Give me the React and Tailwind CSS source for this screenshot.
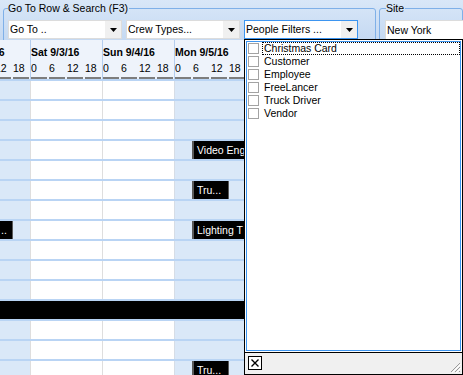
import React from "react";

const days = ["Fri 9/2/16", "Sat 9/3/16", "Sun 9/4/16", "Mon 9/5/16"];
const hours = ["0", "6", "12", "18"];
const people = ["Christmas Card", "Customer", "Employee", "FreeLancer", "Truck Driver", "Vendor"];

const bars = {
  3: [{ left: 192, width: 53, label: "Video Eng" }],
  5: [{ left: 192, width: 37, label: "Tru...", edge: true }],
  7: [
    { left: 0, width: 13, label: "..", edge: true, flat: true },
    { left: 192, width: 53, label: "Lighting T" },
  ],
  14: [{ left: 192, width: 37, label: "Tru...", edge: true }],
};

function Arrow() {
  return (
    <div className="w-[16px] h-full bg-[#f0f0f0] flex items-center justify-center">
      <svg width="7" height="4" viewBox="0 0 7 4">
        <path d="M0 0 H7 L3.5 4 Z" fill="#000" />
      </svg>
    </div>
  );
}

function Combo({ label, focused }) {
  return (
    <div
      className={`w-[114px] h-[19px] shrink-0 bg-white flex items-stretch border ${
        focused ? "border-[#3d95f0]" : "border-[#dcdcdc]"
      }`}
    >
      <span className="flex-1 pl-[1px] leading-[17px] whitespace-nowrap overflow-hidden">{label}</span>
      <Arrow />
    </div>
  );
}

function Row({ index }) {
  const black = index === 11;
  return (
    <div className="h-[20px] border-t-2 border-[#b9d4f4] relative overflow-hidden">
      <div className="flex ml-[-42px] h-full">
        <div className="w-[72px] shrink-0 bg-[#dae8f8]" />
        <div className="w-[72px] shrink-0 bg-white border-l border-[#dedede]" />
        <div className="w-[72px] shrink-0 bg-white border-l border-[#dedede]" />
        <div className="w-[72px] shrink-0 bg-[#dae8f8] border-l border-[#d6dde6]" />
        <div className="w-[72px] shrink-0 bg-[#dae8f8]" />
      </div>
      {black && <div className="absolute inset-0 bg-black" />}
      {(bars[index] || []).map((b, i) => (
        <div
          key={i}
          className={`absolute top-0 bottom-0 bg-black text-white leading-[18px] whitespace-nowrap overflow-hidden ${
            b.flat ? "pl-[1px]" : "border-l-2 border-[#5a5a5a] pl-[3px]"
          } ${b.edge ? "border-r border-r-[#5a5a5a]" : ""}`}
          style={{ left: b.left, width: b.width }}
        >
          {b.label}
        </div>
      ))}
    </div>
  );
}

export default function App() {
  return (
    <div className="w-[463px] h-[375px] relative overflow-hidden bg-white text-black text-[10.5px] font-['Liberation_Sans',Arial,sans-serif]">
      {/* toolbar */}
      <div className="h-[40px] overflow-hidden flex bg-linear-to-b from-[#d9e7f8] to-[#c5d9f2]">
        <fieldset className="ml-[3px] mt-[2px] w-[373px] h-[60px] shrink-0 min-w-0 border border-[#7fb0e8] rounded-[3px]">
          <legend className="ml-[4px] pr-[1px] leading-[12px]">Go To Row &amp; Search (F3)</legend>
          <div className="flex gap-[4px] mt-[6px] pl-[4px]">
            <Combo label="Go To .." />
            <Combo label="Crew Types..." />
            <Combo label="People Filters ..." focused />
          </div>
        </fieldset>
        <fieldset className="ml-[3px] mt-[2px] flex-1 h-[60px] min-w-0 border border-[#7fb0e8] rounded-[3px]">
          <legend className="ml-[6px] pr-[1px] leading-[12px]">Site</legend>
          <div className="mt-[6px] pl-[5px]">
            <div className="h-[20px] w-[120px] bg-white border border-[#dcdcdc] pl-[1px] leading-[18px]">
              New York
            </div>
          </div>
        </fieldset>
      </div>

      {/* timeline header */}
      <div className="h-[39px] bg-[#eef3fb] overflow-hidden">
        <div className="flex ml-[-42px]">
          {days.map((d) => (
            <div key={d} className="w-[72px] h-[39px] shrink-0 border-l border-[#b4cdee] overflow-hidden">
              <div className="pt-[6px] h-[19px] leading-[13px] font-bold whitespace-nowrap">{d}</div>
              <div className="flex mt-[3px] h-[13px] leading-[13px]">
                {hours.map((h) => (
                  <div key={h} className="w-[18px] shrink-0">
                    {h}
                  </div>
                ))}
              </div>
              <div className="flex mt-[2px] h-[2px]">
                {hours.map((h) => (
                  <div key={h} className="w-[16px] mr-[2px] shrink-0 bg-[#7d7d7d]" />
                ))}
              </div>
            </div>
          ))}
        </div>
      </div>

      {/* rows */}
      <div>
        {Array.from({ length: 15 }, (_, i) => (
          <Row key={i} index={i} />
        ))}
      </div>

      {/* people filter dropdown */}
      <div className="absolute left-[244px] top-[39px] w-[219px] h-[336px] border border-black bg-white flex flex-col">
        <div className="flex-1 m-px border border-[#3d95f0]">
          {people.map((p, i) => (
            <div key={p} className="h-[13px] flex items-center">
              <div className="ml-px w-[11px] h-[11px] border border-[#a3a3a3] bg-white shrink-0" />
              <div
                className={`ml-[3px] flex-1 h-[13px] leading-[11px] pl-px border ${
                  i === 0 ? "border-dotted border-black" : "border-transparent"
                }`}
              >
                {p}
              </div>
            </div>
          ))}
        </div>
        <div className="h-[22px] border-t border-black bg-[#f0f0f0] relative">
          <div className="ml-[3px] mt-[3px] w-[14px] h-[14px] border border-black bg-white flex items-center justify-center">
            <svg width="10" height="10" viewBox="0 0 10 10">
              <path d="M1.5 1.5 L8.5 8.5 M8.5 1.5 L1.5 8.5" stroke="#000" strokeWidth="1.4" />
            </svg>
          </div>
          <svg className="absolute right-[1px] bottom-[1px]" width="12" height="12" viewBox="0 0 12 12">
            <path d="M11 2 L2 11 M11 6 L6 11 M11 10 L10 11" stroke="#9a9a9a" strokeWidth="1" />
            <path d="M12 3 L3 12 M12 7 L7 12" stroke="#ffffff" strokeWidth="1" />
          </svg>
        </div>
      </div>
    </div>
  );
}
